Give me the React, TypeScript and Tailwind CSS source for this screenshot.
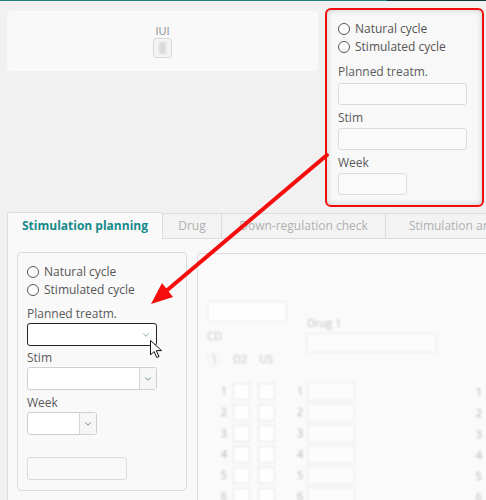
import { ChevronDown } from 'lucide-react';

function Radio({ label }: { label: string }) {
  return (
    <div className="flex items-center h-[18px] gap-[5px]">
      <span className="w-[12px] h-[12px] rounded-full border border-[#555] bg-white" />
      <span className="text-[12px] text-[#555]">{label}</span>
    </div>
  );
}

function Label({ text, className = '' }: { text: string; className?: string }) {
  return <div className={`h-[18px] leading-[18px] text-[12px] text-[#5a5a5a] ${className}`}>{text}</div>;
}

function Select({ width, focused = false, split = true }: { width: string; focused?: boolean; split?: boolean }) {
  return (
    <div
      className={`flex h-[23px] rounded-[3px] bg-white border ${
        focused ? 'border-[#222]' : 'border-[#cfcfcf]'
      } ${width}`}
    >
      <div className="flex-1" />
      <div
        className={`w-[17px] flex items-center justify-center ${split ? 'border-l border-[#d6d6d6] bg-[#f6f6f6]' : 'mr-[2px]'}`}
      >
        <ChevronDown size={10} strokeWidth={1.8} className={focused ? 'text-[#5f9490]' : 'text-[#2d6662]'} />
      </div>
    </div>
  );
}

const rows = [1, 2, 3, 4, 5, 6];

export default function App() {
  return (
    <div className="relative w-[486px] h-[500px] overflow-hidden bg-[#f1f1f1] font-['Open_Sans',sans-serif]">
      {/* top accent line */}
      <div className="flex h-px">
        <div className="w-[387px] bg-[#1d7f77]" />
        <div className="flex-1 bg-[#0e3b37]" />
      </div>

      {/* top section */}
      <div className="flex items-start">
        <div className="ml-[7px] mt-[10px] w-[311px] h-[60px] rounded-[4px] bg-[#f9f9f9] flex flex-col items-center pt-[14px]">
          <div className="text-[11px] leading-[12px] text-[#888]">IUI</div>
          <div className="mt-[1px] w-[19px] h-[20px] rounded-[3px] border border-[#d8d8d8] bg-[#f4f4f4] flex items-center justify-center">
            <div className="w-[7px] h-[12px] bg-[#d9d9d9] blur-[1px]" />
          </div>
        </div>

        <div className="ml-[7px] mt-[7px] w-[159px] h-[199px] rounded-[6px] border-2 border-[#f20d0d] bg-[#f8f8f8] shadow-[inset_0_0_6px_rgba(0,0,0,0.18)] pt-[10px] pl-[11px]">
          <Radio label="Natural cycle" />
          <Radio label="Stimulated cycle" />
          <Label text="Planned treatm." className="mt-[7px]" />
          <div className="mt-[2px] w-[129px] h-[22px] rounded-[3px] border border-[#dcdcdc] bg-[#fafafa]" />
          <Label text="Stim" className="mt-[4px]" />
          <div className="mt-px w-[129px] h-[22px] rounded-[3px] border border-[#dcdcdc] bg-[#fafafa]" />
          <Label text="Week" className="mt-[4px]" />
          <div className="mt-px w-[69px] h-[22px] rounded-[3px] border border-[#dcdcdc] bg-[#fafafa]" />
        </div>
      </div>

      {/* tabs */}
      <div className="flex items-start ml-[7px] mt-[5px] border-b border-[#dcdcdc] h-[27px] whitespace-nowrap">
        <div className="shrink-0 w-[156px] h-[27px] -mb-px rounded-t-[3px] border border-b-0 border-[#dcdcdc] bg-[#f9f9f9] flex items-center justify-center text-[12px] font-bold text-[#16898a]">
          Stimulation planning
        </div>
        <div className="shrink-0 mt-px w-[59px] h-[25px] border border-l-0 border-b-0 border-[#dcdcdc] bg-[#f3f3f3] flex items-center justify-center text-[12px] text-[#b0b0b0]">
          Drug
        </div>
        <div className="shrink-0 mt-px w-[164px] h-[25px] border border-l-0 border-b-0 border-[#dcdcdc] bg-[#f3f3f3] flex items-center justify-center text-[12px] text-[#b0b0b0]">
          Down-regulation check
        </div>
        <div className="shrink-0 mt-px w-[130px] h-[25px] border border-l-0 border-b-0 border-[#dcdcdc] bg-[#f3f3f3] pl-[23px] flex items-center text-[12px] text-[#b0b0b0] overflow-hidden">
          Stimulation and monitoring
        </div>
      </div>

      {/* tab content */}
      <div className="ml-[7px] h-[300px] border-l border-[#dcdcdc] bg-[#f9f9f9] flex items-start pl-[9px] pt-[13px]">
        <div className="shrink-0 w-[170px] h-[239px] rounded-[4px] border border-[#dcdcdc] bg-[#f9f9f9] pt-[10px] pl-[9px]">
          <Radio label="Natural cycle" />
          <Radio label="Stimulated cycle" />
          <Label text="Planned treatm." className="mt-[6px]" />
          <Select width="w-[130px]" focused split={false} />
          <Label text="Stim" className="mt-[3px]" />
          <Select width="w-[130px]" />
          <Label text="Week" className="mt-[4px]" />
          <Select width="w-[70px]" />
          <div className="mt-[22px] w-[100px] h-[23px] rounded-[3px] border border-[#dcdcdc] bg-[#f9f9f9]" />
        </div>

        {/* blurred background panel */}
        <div className="ml-[10px] mt-px flex-1 h-[260px] rounded-tl-[4px] border-l border-t border-[#dcdcdc] bg-[#fafafa] overflow-hidden">
          <div className="flex pt-[47px] pl-[9px] blur-[1.3px] opacity-70 text-[11px] text-[#aaa]">
            <div className="w-[90px] flex flex-col">
              <div className="w-[80px] h-[21px] rounded-[3px] border border-[#e2e2e2] bg-white" />
              <div className="mt-[7px] h-[14px] leading-[14px]">CD</div>
              <div className="mt-[9px] h-[14px] leading-[14px] flex items-center">
                <span className="w-[14px] h-[14px] rounded-full border border-[#e6e6e6] flex items-center justify-center text-[10px]">1</span>
                <span className="ml-[12px]">D2</span>
                <span className="ml-[12px]">US</span>
              </div>
              <div className="mt-[17px] flex flex-col gap-[4px]">
                {rows.map((n) => (
                  <div key={n} className="flex items-center h-[17px]">
                    <span className="w-[26px] pr-[6px] text-right text-[#999]">{n}</span>
                    <span className="w-[17px] h-[17px] border border-[#ddd] bg-white" />
                    <span className="ml-[8px] w-[17px] h-[17px] border border-[#ddd] bg-white" />
                  </div>
                ))}
              </div>
            </div>

            <div className="flex flex-col">
              <div className="mt-[15px] ml-[10px] h-[14px] leading-[14px]">Drug 1</div>
              <div className="mt-[3px] ml-[9px] w-[131px] h-[20px] rounded-[3px] border border-[#e4e4e4] bg-[#fcfcfc]" />
              <div className="mt-[30px] flex flex-col gap-[4px]">
                {rows.map((n) => (
                  <div key={n} className="flex items-center h-[17px]">
                    <span className="w-[10px] text-[#999]">{n}</span>
                    <span className="w-[48px] h-[19px] border border-[#e4e4e4] bg-[#fcfcfc]" />
                  </div>
                ))}
              </div>
            </div>

            <div className="ml-auto mr-[4px] mt-[82px] flex flex-col gap-[4px]">
              {rows.map((n) => (
                <div key={n} className="h-[17px] leading-[17px] text-[#999]">{n}</div>
              ))}
            </div>
          </div>
        </div>
      </div>

      {/* annotation arrow + cursor overlay */}
      <svg className="absolute inset-0 pointer-events-none" width="486" height="500" viewBox="0 0 486 500">
        <line x1="327" y1="155" x2="165" y2="292" stroke="#f50d0d" strokeWidth="4" strokeLinecap="round" />
        <polygon points="151,304 162,283 173,297" fill="#f50d0d" />
        <path
          d="M150.5 340.5 L150.5 355 L154 351.5 L156.8 357.5 L159 356.5 L156.3 350.6 L161.5 350.6 Z"
          fill="#fff"
          stroke="#111"
          strokeWidth="1"
          strokeLinejoin="round"
        />
      </svg>
    </div>
  );
}
